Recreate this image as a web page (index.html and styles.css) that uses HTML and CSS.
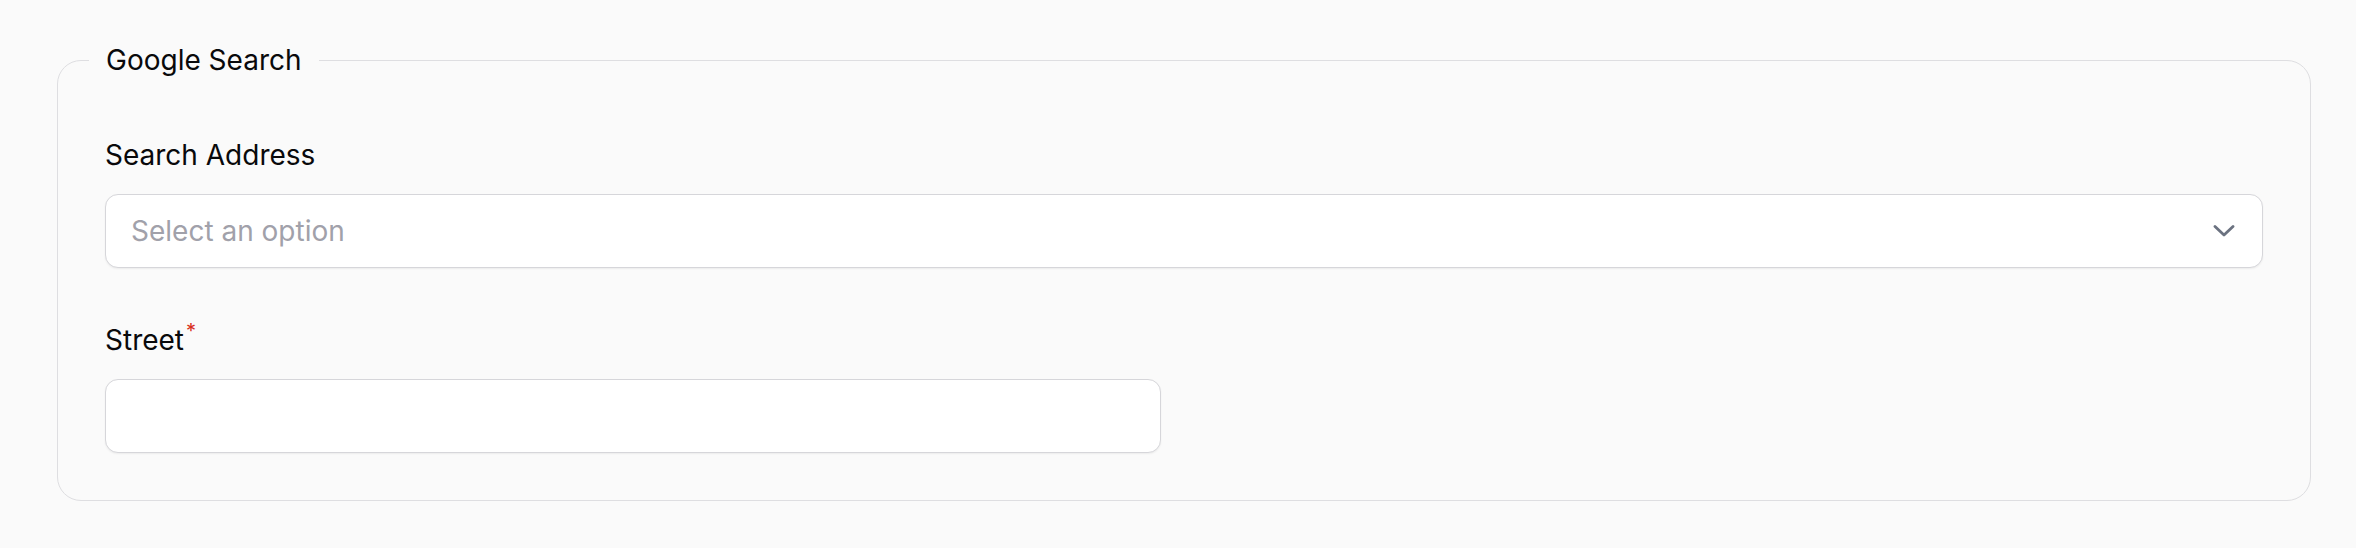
FILE: index.html
```html
<!DOCTYPE html>
<html lang="en">
<head>
<meta charset="utf-8">
<title>Google Search</title>
<link rel="stylesheet" href="styles.css">
</head>
<body>
<div class="page">
  <fieldset class="section">
    <legend class="section-title">Google Search</legend>
    <div class="field">
      <label class="field-label">Search Address</label>
      <div class="select">
        <span class="placeholder">Select an option</span>
        <svg class="chevron" width="22" height="12" viewBox="0 0 22 12" aria-hidden="true">
          <path d="M2 1.5 L11 10 L20 1.5" fill="none" stroke="#6b7280" stroke-width="2.8" stroke-linecap="round" stroke-linejoin="round"/>
        </svg>
      </div>
    </div>
    <div class="grid-2">
      <div class="field">
        <label class="field-label">Street<sup class="req">*</sup></label>
        <div class="input"></div>
      </div>
    </div>
  </fieldset>
</div>
</body>
</html>
```

FILE: styles.css
```css
html, body {
  margin: 0;
  padding: 0;
  background: #fafafa;
}
body {
  font-family: Inter, "Noto Sans", "Liberation Sans", sans-serif;
  color: #09090b;
}
.page {
  padding: 40px 45px 40px 57px;
}
.section {
  margin: 0;
  border: 1px solid #dedee1;
  border-radius: 24px;
  padding: 55px 47px 47px 47px;
  min-width: 0;
}
.section-title {
  font-size: 28px;
  line-height: 40px;
  font-weight: 400;
  padding: 0 17px;
  margin-left: -16px;
}
.field {
  display: flex;
  flex-direction: column;
  gap: 19px;
}
.field-label {
  font-size: 28px;
  line-height: 40px;
  font-weight: 400;
}
.req {
  color: #d92d20;
  font-size: 20px;
  line-height: 0;
  vertical-align: 0;
  position: relative;
  top: -12px;
  margin-left: 2px;
}
.select {
  height: 72px;
  background: #fff;
  border: 1px solid #d6d6da;
  border-radius: 13px;
  box-shadow: 0 1px 2px rgba(0, 0, 0, 0.06);
  display: flex;
  align-items: center;
  justify-content: space-between;
  padding: 0 27px 0 25px;
}
.placeholder {
  font-size: 28px;
  color: #a1a1aa;
}
.chevron {
  display: block;
}
.grid-2 {
  margin-top: 52px;
  display: grid;
  grid-template-columns: 1fr 1fr;
  column-gap: 46px;
}
.input {
  height: 72px;
  background: #fff;
  border: 1px solid #d6d6da;
  border-radius: 13px;
  box-shadow: 0 1px 2px rgba(0, 0, 0, 0.06);
}
```
